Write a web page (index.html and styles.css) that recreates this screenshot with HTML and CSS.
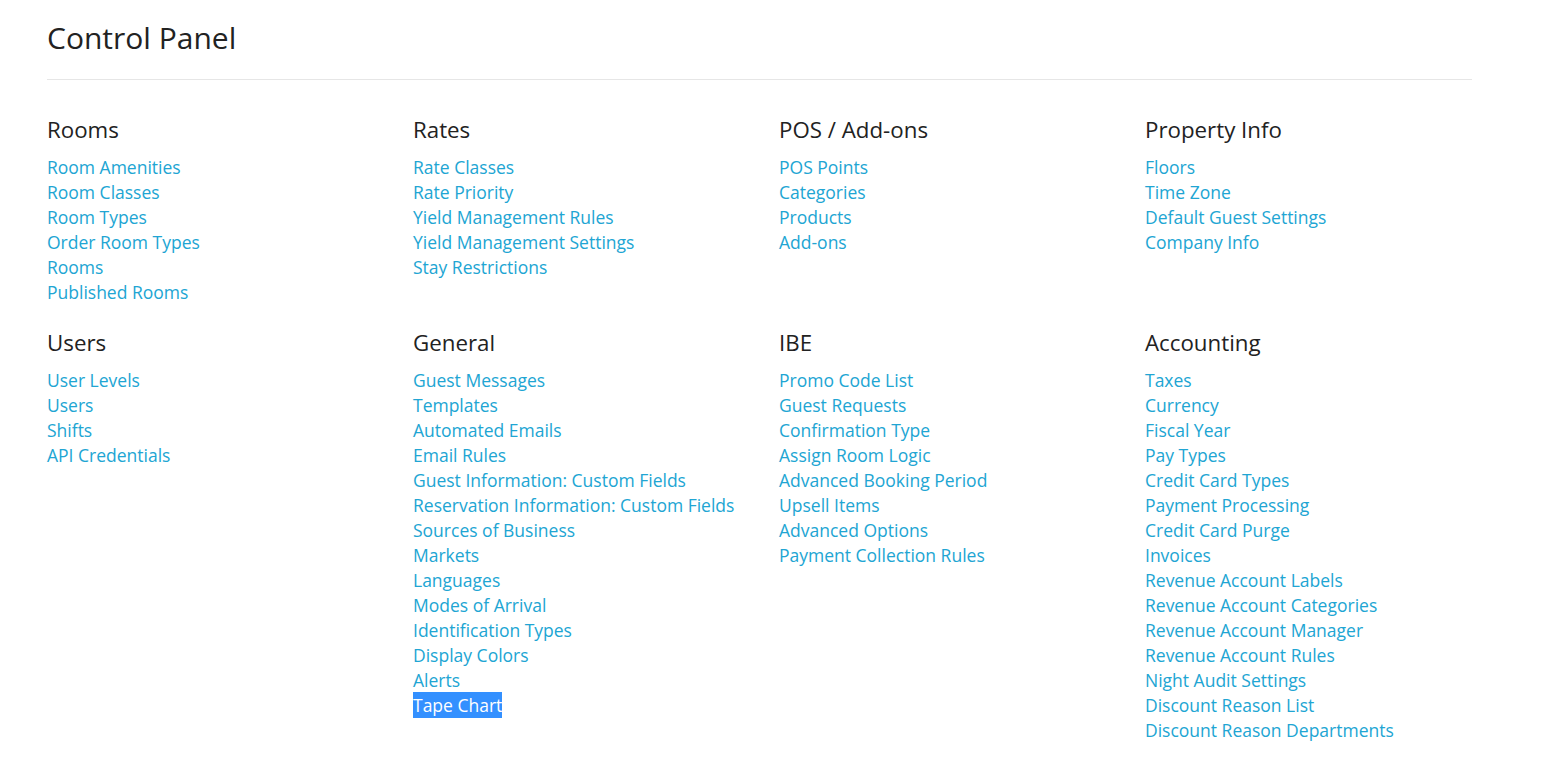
FILE: index.html
```html
<!DOCTYPE html>
<html>
<head>
<meta charset="utf-8">
<link rel="stylesheet" href="styles.css">
</head>
<body>
<div class="page">
  <h1 class="title">Control Panel</h1>
  <hr class="rule">
  <div class="grid">
    <section class="group">
      <h2>Rooms</h2>
      <ul>
        <li><a>Room Amenities</a></li>
        <li><a>Room Classes</a></li>
        <li><a>Room Types</a></li>
        <li><a>Order Room Types</a></li>
        <li><a>Rooms</a></li>
        <li><a>Published Rooms</a></li>
      </ul>
    </section>
    <section class="group">
      <h2>Rates</h2>
      <ul>
        <li><a>Rate Classes</a></li>
        <li><a>Rate Priority</a></li>
        <li><a>Yield Management Rules</a></li>
        <li><a>Yield Management Settings</a></li>
        <li><a>Stay Restrictions</a></li>
      </ul>
    </section>
    <section class="group">
      <h2>POS / Add-ons</h2>
      <ul>
        <li><a>POS Points</a></li>
        <li><a>Categories</a></li>
        <li><a>Products</a></li>
        <li><a>Add-ons</a></li>
      </ul>
    </section>
    <section class="group">
      <h2>Property Info</h2>
      <ul>
        <li><a>Floors</a></li>
        <li><a>Time Zone</a></li>
        <li><a>Default Guest Settings</a></li>
        <li><a>Company Info</a></li>
      </ul>
    </section>
    <section class="group">
      <h2>Users</h2>
      <ul>
        <li><a>User Levels</a></li>
        <li><a>Users</a></li>
        <li><a>Shifts</a></li>
        <li><a>API Credentials</a></li>
      </ul>
    </section>
    <section class="group">
      <h2>General</h2>
      <ul>
        <li><a>Guest Messages</a></li>
        <li><a>Templates</a></li>
        <li><a>Automated Emails</a></li>
        <li><a>Email Rules</a></li>
        <li><a>Guest Information: Custom Fields</a></li>
        <li><a>Reservation Information: Custom Fields</a></li>
        <li><a>Sources of Business</a></li>
        <li><a>Markets</a></li>
        <li><a>Languages</a></li>
        <li><a>Modes of Arrival</a></li>
        <li><a>Identification Types</a></li>
        <li><a>Display Colors</a></li>
        <li><a>Alerts</a></li>
        <li><a class="selected">Tape Chart</a></li>
      </ul>
    </section>
    <section class="group">
      <h2>IBE</h2>
      <ul>
        <li><a>Promo Code List</a></li>
        <li><a>Guest Requests</a></li>
        <li><a>Confirmation Type</a></li>
        <li><a>Assign Room Logic</a></li>
        <li><a>Advanced Booking Period</a></li>
        <li><a>Upsell Items</a></li>
        <li><a>Advanced Options</a></li>
        <li><a>Payment Collection Rules</a></li>
      </ul>
    </section>
    <section class="group">
      <h2>Accounting</h2>
      <ul>
        <li><a>Taxes</a></li>
        <li><a>Currency</a></li>
        <li><a>Fiscal Year</a></li>
        <li><a>Pay Types</a></li>
        <li><a>Credit Card Types</a></li>
        <li><a>Payment Processing</a></li>
        <li><a>Credit Card Purge</a></li>
        <li><a>Invoices</a></li>
        <li><a>Revenue Account Labels</a></li>
        <li><a>Revenue Account Categories</a></li>
        <li><a>Revenue Account Manager</a></li>
        <li><a>Revenue Account Rules</a></li>
        <li><a>Night Audit Settings</a></li>
        <li><a>Discount Reason List</a></li>
        <li><a>Discount Reason Departments</a></li>
      </ul>
    </section>
  </div>
</div>
</body>
</html>
```
FILE: styles.css
```css
html, body {
  margin: 0;
  padding: 0;
  background: #fff;
}
body {
  font-family: "Open Sans", "Noto Sans", sans-serif;
  color: #222;
}
.page {
  padding: 18px 0 0 47px;
  width: 1425px;
}
.title {
  font-size: 30px;
  font-weight: 400;
  line-height: 40px;
  margin: 0;
  color: #222;
}
.rule {
  border: 0;
  border-top: 1px solid #e6e6e6;
  margin: 21px 0 0 0;
  height: 0;
}
.grid {
  display: grid;
  grid-template-columns: repeat(4, 366px);
  row-gap: 23px;
  padding-top: 35px;
}
.group h2 {
  font-size: 22.3px;
  font-weight: 400;
  line-height: 30px;
  margin: 0 0 10px 0;
  color: #222;
}
.group ul {
  list-style: none;
  margin: 0;
  padding: 0;
}
.group li {
  font-size: 17.5px;
  line-height: 25px;
}
.group a {
  color: #21a5d3;
  text-decoration: none;
}
.group a.selected {
  background: #3390ff;
  color: #fff;
  padding: 1px 0;
}
```
